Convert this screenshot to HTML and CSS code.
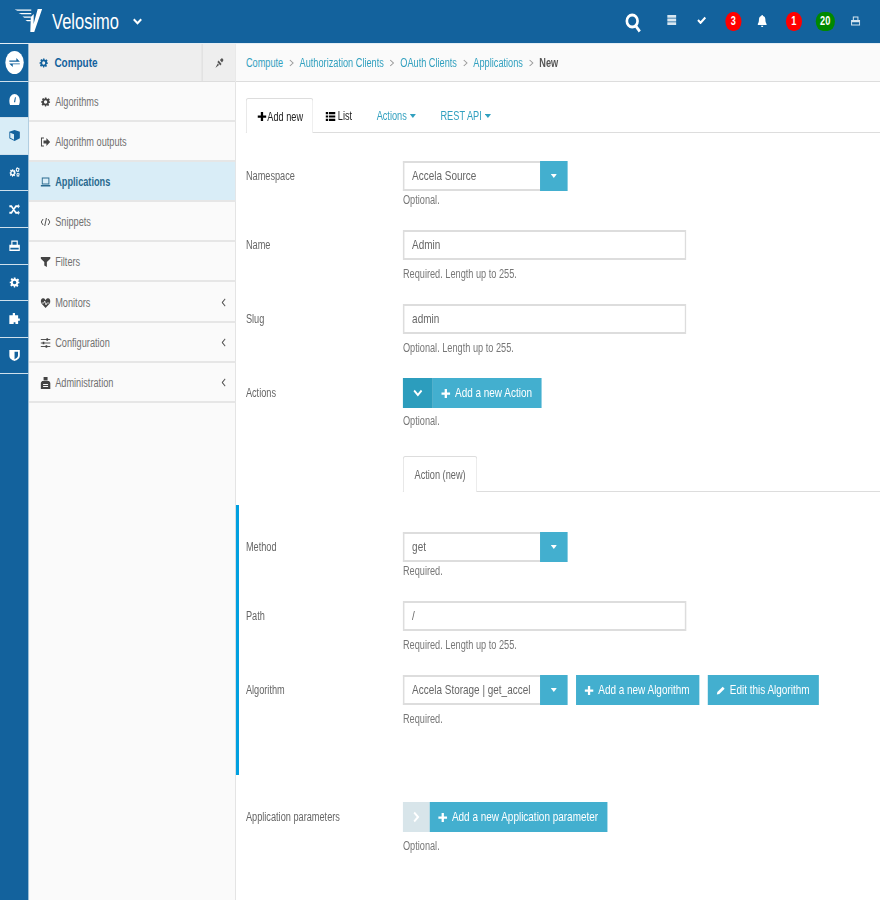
FILE: index.html
```html
<!DOCTYPE html>
<html lang="en">
<head>
<meta charset="utf-8">
<title>Velosimo</title>
<link rel="stylesheet" href="styles.css">
</head>
<body>
<svg class="defs" aria-hidden="true">
<symbol id="gear" viewBox="0 0 24 24" preserveAspectRatio="none"><path fill-rule="evenodd" d="M10 1h4l.7 3.200 1.900.8 2.800-1.800 2.800 2.800-1.800 2.800.8 1.900L23 10.500v3l-3.200.7-.8 1.900 1.800 2.800-2.800 2.800-2.800-1.800-1.900.8L13.500 23h-3l-.7-3.200-1.900-.8-2.800 1.800-2.800-2.800 1.800-2.800-.8-1.900L1 13.500v-3l3.200-.7.800-1.900-1.800-2.800 2.800-2.800 2.800 1.800 1.900-.8zM12 8a4 4 0 1 0 0 8 4 4 0 0 0 0-8z"/></symbol>
<symbol id="plus" viewBox="0 0 12 12" preserveAspectRatio="none"><path d="M4.500 0h3v4.500H12v3H7.500V12h-3V7.500H0v-3h4.500z"/></symbol>
<symbol id="caret" viewBox="0 0 8 5" preserveAspectRatio="none"><path d="M0 0h8L4 5z"/></symbol>
<symbol id="lchev" viewBox="0 0 6 10" preserveAspectRatio="none"><path d="M5 1 1 5l4 4" fill="none" stroke="currentColor" stroke-width="1.200"/></symbol>
</svg>

<div class="page">
<header class="topbar">
  <div class="brand">
    <svg class="logo" viewBox="0 0 28 24" preserveAspectRatio="none"><path d="M23.500 1H28l-8 23h-4l.5-15 3-3-.2 10z" fill="#fff"/><path d="M0 1.500h17v1.300H3zM4 5h13v1.300H7zM8 8.500h8.500v1.300H10zM11 12h5.500v1.300H13z" fill="#fff"/></svg>
    <span class="brand-name">Velosimo</span>
    <svg class="brand-chev" viewBox="0 0 12 8" preserveAspectRatio="none"><path d="M1.500 1.500 6 6l4.500-4.500" fill="none" stroke="#fff" stroke-width="2.400"/></svg>
  </div>
  <div class="top-tools">
    <svg class="t-search" viewBox="0 0 18 20" preserveAspectRatio="none"><circle cx="8" cy="8" r="6" fill="none" stroke="#fff" stroke-width="3"/><path d="m12 13 4.500 5.500" stroke="#fff" stroke-width="3"/></svg>
    <svg class="t-server" viewBox="0 0 10 10" preserveAspectRatio="none"><path fill="#d8e6f0" d="M0 0h10v2.800H0zM0 3.600h10v2.800H0zM0 7.200h10V10H0z"/></svg>
    <svg class="t-check" viewBox="0 0 10 8" preserveAspectRatio="none"><path d="M1 4l2.800 2.800L9 1.400" fill="none" stroke="#fff" stroke-width="2.200"/></svg>
    <span class="badge red b-three">3</span>
    <svg class="t-bell" viewBox="0 0 10 12" preserveAspectRatio="none"><path fill="#fff" d="M5 0c.6 0 1 .4 1 1 1.800.4 2.500 2 2.500 3.500 0 2.500.5 3.500 1.500 4.500v1H0V9c1-1 1.500-2 1.500-4.500C1.500 3 2.200 1.400 4 1c0-.6.400-1 1-1zM3.800 10.700h2.400c0 .8-.5 1.300-1.200 1.300s-1.200-.5-1.200-1.300z"/></svg>
    <span class="badge red b-one">1</span>
    <span class="badge green b-twenty">20</span>
    <svg class="t-print" viewBox="0 0 10 10" preserveAspectRatio="none"><path fill="none" stroke="#d8e6f0" stroke-width="1.100" d="M2.500 4V1h5v3M.6 4.500h8.800v4.500H.6z"/><path fill="#d8e6f0" d="M.6 4.500h8.800v1.800H.6z"/></svg>
  </div>
</header>

<div class="shell">
  <nav class="rail">
    <a class="rail-item"><span class="rail-circle"><svg viewBox="0 0 12 10" preserveAspectRatio="none"><path fill="#13629d" d="M0 2.500h8V0l4 3.800H0zM12 6.200H4v2.800L0 5.400h12z"/></svg></span></a>
    <a class="rail-item"><svg class="r-ic" viewBox="0 0 12 10" preserveAspectRatio="none"><path fill="#fff" fill-rule="evenodd" d="M6 0a6 6 0 0 1 6 6c0 1.500-.4 3-1 4H1C.4 9 0 7.500 0 6a6 6 0 0 1 6-6zM5.300 7.500h1.400L7.500 3H6.500z"/></svg></a>
    <a class="rail-item current"><svg class="r-ic" viewBox="0 0 10 12" preserveAspectRatio="none"><path fill="#13629d" d="M5 0l5 2v7l-5 3-5-3V2z"/><path fill="#d9edf7" d="M1 3l3.500 1.500v6L1 8.500z"/></svg></a>
    <a class="rail-item"><svg class="r-ic" viewBox="0 0 14 12" preserveAspectRatio="none"><use href="#gear" x="0" y="2" width="9" height="9" fill="#fff"/><use href="#gear" x="8" y="0" width="6" height="6" fill="#fff"/><use href="#gear" x="9" y="6" width="5" height="5" fill="#fff"/></svg></a>
    <a class="rail-item"><svg class="r-ic" viewBox="0 0 12 10" preserveAspectRatio="none"><path fill="none" stroke="#fff" stroke-width="1.800" d="M0 2h2.500l5 6H10M0 8h2.500l5-6H10"/><path fill="#fff" d="M10 0l2 2-2 2zM10 6l2 2-2 2z"/></svg></a>
    <a class="rail-item"><svg class="r-ic" viewBox="0 0 12 10" preserveAspectRatio="none"><path fill="none" stroke="#fff" stroke-width="1.300" d="M3 4.500V1h6v3.500M.7 5h10.600v4.300H.7z"/><path fill="#fff" d="M.7 5h10.600v2H.7z"/></svg></a>
    <a class="rail-item"><svg class="r-ic"><use href="#gear" fill="#fff"/></svg></a>
    <a class="rail-item"><svg class="r-ic" viewBox="0 0 12 12" preserveAspectRatio="none"><path fill="#fff" d="M4 0h2.500v2.500h3.500V6H12v2.500H10V12H7V10H5v2H0V2.500h4z"/></svg></a>
    <a class="rail-item"><svg class="r-ic" viewBox="0 0 10 12" preserveAspectRatio="none"><path fill="#fff" fill-rule="evenodd" d="M0 0h10v6c0 3-2.500 5-5 6-2.500-1-5-3-5-6zM5 1.800v8.300c1.500-.8 3.200-2 3.200-4V1.800z"/></svg></a>
  </nav>

  <aside class="side">
    <div class="side-head">
      <div class="side-title"><svg class="side-gear"><use href="#gear" fill="#13629d"/></svg><span>Compute</span></div>
      <div class="side-pin"><svg viewBox="0 0 10 10" preserveAspectRatio="none"><path fill="#555" d="M0 10l3-4.500 1.500 1.500zM4 2.500 7.500 6 6 7.500 2.500 4zM5.500 2 8 0l2 2-2 2.500z"/></svg></div>
    </div>
    <ul class="side-list">
      <li class="side-item"><svg class="s-ic"><use href="#gear" fill="#444"/></svg><span>Algorithms</span></li>
      <li class="side-item"><svg class="s-ic" viewBox="0 0 12 10" preserveAspectRatio="none"><path fill="none" stroke="#444" stroke-width="1.200" d="M4 1H1v8h3"/><path fill="#444" d="M3.500 3.500H7V1l4.500 4L7 9V6.500H3.500z"/></svg><span>Algorithm outputs</span></li>
      <li class="side-item active"><svg class="s-ic" viewBox="0 0 12 10" preserveAspectRatio="none"><path fill="none" stroke="#2a6a8f" stroke-width="1.100" d="M2 1h8v6H2z"/><path fill="#2a6a8f" d="M0 8h12v1.500H0z"/></svg><span>Applications</span></li>
      <li class="side-item"><svg class="s-ic" viewBox="0 0 12 10" preserveAspectRatio="none"><path fill="none" stroke="#444" d="M3 2 .8 5 3 8M9 2l2.200 3L9 8M7 1 5 9"/></svg><span>Snippets</span></li>
      <li class="side-item"><svg class="s-ic" viewBox="0 0 10 10" preserveAspectRatio="none"><path fill="#444" d="M0 0h10v1.500L6.300 5v5L3.700 8.500V5L0 1.500z"/></svg><span>Filters</span></li>
      <li class="side-item"><svg class="s-ic" viewBox="0 0 12 10" preserveAspectRatio="none"><path fill="#444" d="M6 10 1 5.500C-1 3 1-.5 3.500.3 4.800.6 5.600 1.500 6 2.300 6.400 1.500 7.200.6 8.500.3 11-.5 13 3 11 5.500z"/><path fill="none" stroke="#fafafa" stroke-width=".8" d="M1 5h3l1-2 1.500 4 1-2h3"/></svg><span>Monitors</span><svg class="s-chev"><use href="#lchev"/></svg></li>
      <li class="side-item"><svg class="s-ic" viewBox="0 0 12 10" preserveAspectRatio="none"><path fill="none" stroke="#444" d="M0 1.500h12M0 5h12M0 8.500h12"/><path fill="#444" d="M7 .2h2v2.600H7zM2.500 3.700h2v2.600h-2zM6 7.200h2v2.600H6z"/></svg><span>Configuration</span><svg class="s-chev"><use href="#lchev"/></svg></li>
      <li class="side-item"><svg class="s-ic admin" viewBox="0 0 10 12" preserveAspectRatio="none"><path fill="#444" d="M3 0h4v3.500H3zM1.500 4h7L10 6v6H0V6z"/><path fill="#fafafa" d="M2.500 7h5v1h-5zM2.500 9h5v1h-5z"/></svg><span>Administration</span><svg class="s-chev"><use href="#lchev"/></svg></li>
    </ul>
  </aside>

  <main class="main">
    <div class="crumbs">
      <a>Compute</a><svg class="sep" viewBox="0 0 5 8" preserveAspectRatio="none"><path d="M1 1l3 3-3 3" fill="none" stroke="#999"/></svg>
      <a>Authorization Clients</a><svg class="sep" viewBox="0 0 5 8" preserveAspectRatio="none"><path d="M1 1l3 3-3 3" fill="none" stroke="#999"/></svg>
      <a>OAuth Clients</a><svg class="sep" viewBox="0 0 5 8" preserveAspectRatio="none"><path d="M1 1l3 3-3 3" fill="none" stroke="#999"/></svg>
      <a>Applications</a><svg class="sep" viewBox="0 0 5 8" preserveAspectRatio="none"><path d="M1 1l3 3-3 3" fill="none" stroke="#999"/></svg>
      <b>New</b>
    </div>

    <div class="tabs">
      <div class="tab on"><svg class="tab-ic"><use href="#plus"/></svg>Add new</div>
      <div class="tab"><svg class="tab-ic list" viewBox="0 0 12 10" preserveAspectRatio="none"><path d="M0 0h3v2.400H0zM4 0h8v2.400H4zM0 3.800h3v2.400H0zM4 3.800h8v2.400H4zM0 7.600h3V10H0zM4 7.600h8V10H4z"/></svg>List</div>
      <div class="tab link">Actions<svg class="tab-caret"><use href="#caret"/></svg></div>
      <div class="tab link">REST API<svg class="tab-caret"><use href="#caret"/></svg></div>
    </div>

    <form class="form">
      <div class="row first">
        <label class="lab">Namespace</label>
        <div class="ctl">
          <div class="combo"><span class="combo-val"><span class="combo-text">Accela Source</span></span><span class="combo-btn"><svg class="caret-w"><use href="#caret"/></svg></span></div>
          <p class="help">Optional.</p>
        </div>
      </div>
      <div class="row">
        <label class="lab">Name</label>
        <div class="ctl">
          <div class="field">Admin</div>
          <p class="help low">Required. Length up to 255.</p>
        </div>
      </div>
      <div class="row">
        <label class="lab">Slug</label>
        <div class="ctl">
          <div class="field">admin</div>
          <p class="help low">Optional. Length up to 255.</p>
        </div>
      </div>
      <div class="row">
        <label class="lab">Actions</label>
        <div class="ctl">
          <div class="btns"><span class="toggle"><svg viewBox="0 0 12 8" preserveAspectRatio="none"><path d="M1.500 1.500 6 6l4.500-4.500" fill="none" stroke="#fff" stroke-width="2.200"/></svg></span><span class="btn"><svg class="btn-ic"><use href="#plus"/></svg>Add a new Action</span></div>
          <p class="help mid">Optional.</p>
        </div>
      </div>

      <div class="subtabs"><div class="subtab">Action (new)</div></div>

      <section class="nested">
        <div class="row first">
          <label class="lab">Method</label>
          <div class="ctl">
            <div class="combo"><span class="combo-val"><span class="combo-text">get</span></span><span class="combo-btn"><svg class="caret-w"><use href="#caret"/></svg></span></div>
            <p class="help">Required.</p>
          </div>
        </div>
        <div class="row">
          <label class="lab">Path</label>
          <div class="ctl">
            <div class="field">/</div>
            <p class="help low">Required. Length up to 255.</p>
          </div>
        </div>
        <div class="row">
          <label class="lab">Algorithm</label>
          <div class="ctl">
            <div class="btn-line">
              <div class="combo"><span class="combo-val"><span class="combo-text">Accela Storage | get_accela</span></span><span class="combo-btn"><svg class="caret-w"><use href="#caret"/></svg></span></div>
              <span class="btn"><svg class="btn-ic"><use href="#plus"/></svg>Add a new Algorithm</span>
              <span class="btn"><svg class="btn-ic" viewBox="0 0 12 12" preserveAspectRatio="none"><path fill="#fff" d="M8.500 1 11 3.500 4 10.500.8 11.200 1.500 8z"/></svg>Edit this Algorithm</span>
            </div>
            <p class="help low">Required.</p>
          </div>
        </div>
      </section>

      <div class="row params">
        <label class="lab">Application parameters</label>
        <div class="ctl">
          <div class="btns"><span class="toggle off"><svg viewBox="0 0 8 12" preserveAspectRatio="none"><path d="M1.500 1.500 6 6l-4.500 4.500" fill="none" stroke="#fff" stroke-width="2.200"/></svg></span><span class="btn"><svg class="btn-ic"><use href="#plus"/></svg>Add a new Application parameter</span></div>
          <p class="help low">Optional.</p>
        </div>
      </div>
    </form>
  </main>
</div>
</div>
</body>
</html>
```

FILE: styles.css
```css
* { box-sizing: border-box; }
html, body { margin: 0; padding: 0; height: 100%; }
body {
  width: 880px;
  height: 900px;
  overflow: hidden;
  background: #fff;
  color: #666;
  font: 12px/16px "Liberation Sans", Arial, sans-serif;
}
p { margin: 0; }
ul { margin: 0; padding: 0; list-style: none; }
.defs { position: absolute; width: 0; height: 0; }

/* The source page is about 1149px wide, squeezed horizontally into the window. */
.page {
  width: 1148.800px;
  height: 900px;
  transform: scaleX(.766);
  transform-origin: 0 0;
}

.topbar {
  height: 44px;
  background: #13629d;
  border-bottom: 1px solid #e4eef5;
  display: flex;
  align-items: center;
  justify-content: space-between;
}
.brand { display: flex; align-items: center; padding-left: 19px; }
.logo { width: 36px; height: 24px; margin-top: -3px; }
.brand-name { margin-left: 13px; font-size: 21.500px; line-height: 30px; color: #fff; }
.brand-chev { width: 13px; height: 7px; margin-left: 18px; }
.top-tools { display: flex; align-items: center; padding-right: 26px; height: 43px; }
.t-search { width: 21px; height: 20px; margin-top: 2px; }
.t-server { width: 12px; height: 10px; margin: -3px 0 0 34px; }
.t-check { width: 12px; height: 8px; margin: -3px 0 0 27px; }
.badge {
  height: 19px;
  border-radius: 10px;
  color: #fff;
  font-size: 12px;
  font-weight: bold;
  line-height: 19px;
  text-align: center;
}
.red { background: #f00; }
.green { background: #080; }
.b-three { width: 21px; margin-left: 25px; }
.t-bell { width: 12px; height: 12px; margin: -2px 0 0 21px; }
.b-one { width: 21px; margin-left: 25px; }
.b-twenty { width: 25px; margin-left: 18px; }
.t-print { width: 12px; height: 10px; margin: -2px 0 0 21px; }

.shell { display: flex; height: 856px; }
.rail {
  width: 38px;
  padding-top: 1px;
  background: #13629d;
  display: grid;
  grid-auto-rows: 36.600px;
  border-right: 1px solid #e4eef5;
}
.rail-item {
  display: flex;
  align-items: center;
  justify-content: center;
  border-bottom: 1px solid #cfe0ec;
}
.rail-item.current { background: #d9edf7; }
.rail-circle {
  width: 24px;
  height: 23px;
  border-radius: 50%;
  background: #fff;
  display: flex;
  align-items: center;
  justify-content: center;
}
.rail-circle svg { width: 14px; height: 10px; }
.r-ic { width: 14px; height: 11px; }

.side { width: 270px; background: #fafafa; border-right: 1px solid #ddd; }
.side-head { height: 38px; background: #eee; border-bottom: 1px solid #ddd; display: flex; }
.side-title {
  flex: 1;
  display: flex;
  align-items: center;
  padding-left: 13px;
  color: #13629d;
  font-size: 13px;
  font-weight: bold;
}
.side-gear { width: 12px; height: 10px; margin-right: 8px; }
.side-pin { width: 44px; border-left: 2px solid #e2e2e2; display: flex; align-items: center; justify-content: center; }
.side-pin svg { width: 11px; height: 10px; }
.side-item {
  height: 40.100px;
  display: flex;
  align-items: center;
  padding: 2px 12px 0 15px;
  border-bottom: 2px solid #e6e6e6;
  color: #707070;
  font-size: 12px;
}
.side-item span { flex: 1; margin-left: 6px; }
.side-item.active { background: #d9edf7; color: #2a6a8f; font-weight: bold; }
.s-ic { width: 13px; height: 10px; }
.s-ic.admin { height: 12px; }
.s-chev { width: 6px; height: 9px; color: #555; }

.main { flex: 1; min-width: 0; }
.crumbs {
  height: 38px;
  background: #fafafa;
  border-bottom: 1px solid #ddd;
  padding-left: 13px;
  display: flex;
  align-items: center;
  font-size: 12px;
  color: #31a0bf;
}
.crumbs b { color: #555; }
.sep { width: 7px; height: 8px; margin: 0 7.200px; }

.tabs { margin: 16px 0 0 13px; height: 35px; display: flex; border-bottom: 1px solid #ddd; }
.tab {
  padding: 1px 16px 0;
  height: 35px;
  color: #222;
  font-size: 12px;
  white-space: nowrap;
  display: flex;
  align-items: center;
}
.tab.on {
  width: 88px;
  padding: 1px 0 0 14px;
  background: #fff;
  border: 1px solid #ddd;
  border-bottom: 0;
  border-radius: 3px 3px 0 0;
}
.tab.link { color: #31a0bf; }
.tab-ic { width: 12px; height: 9px; margin-right: 1px; }
.tab-ic.list { width: 13px; height: 9px; margin-right: 3px; }
.tab-caret { width: 8px; height: 4px; margin-left: 4px; fill: #31a0bf; }

.form { padding-top: 28px; }
.row { display: flex; padding: 22px 0 0 13px; }
.row.first { padding-top: 0; }
.lab { width: 205px; padding-top: 6.500px; color: #666; font-size: 12px; }
.help { padding-top: 1px; color: #777; font-size: 12px; }
.help.low { padding-top: 6px; }
.help.mid { padding-top: 5px; }
.combo { display: flex; width: 215px; height: 30px; }
.combo-val {
  flex: 1;
  min-width: 0;
  border: 2px solid #ddd;
  border-right: 0;
  padding: 5px 12px 0 10px;
  color: #666;
  font-size: 13px;
}
.combo-text { display: block; white-space: nowrap; overflow: hidden; }
.combo-btn {
  width: 36px;
  background: #43afcf;
  display: flex;
  align-items: center;
  justify-content: center;
}
.caret-w { width: 8px; height: 4px; fill: #fff; }
.field {
  width: 370px;
  height: 30px;
  border: 2px solid #ddd;
  padding: 5px 10px 0;
  color: #666;
  font-size: 13px;
}
.btns { display: flex; height: 30px; }
.toggle { width: 39px; background: #2c9dbd; display: flex; align-items: center; justify-content: center; }
.toggle svg { width: 13px; height: 8px; }
.toggle.off { width: 35px; background: #d8e5ea; }
.toggle.off svg { width: 9px; height: 12px; }
.btn {
  display: flex;
  align-items: center;
  height: 30px;
  padding: 0 12.500px 0 11px;
  background: #43afcf;
  color: #fff;
  font-size: 13px;
  white-space: nowrap;
}
.btn-ic { width: 12px; height: 9px; margin-right: 6px; fill: #fff; }
.btn-line { display: flex; gap: 11px; }
.subtabs { margin: 27px 0 0 218px; height: 36px; border-bottom: 1px solid #ddd; }
.subtab {
  width: 97px;
  height: 36px;
  border: 1px solid #ddd;
  border-bottom: 0;
  border-radius: 3px 3px 0 0;
  background: #fff;
  padding-top: 10px;
  text-align: center;
  color: #666;
}
.nested { margin-top: 13px; height: 270px; padding-top: 27px; border-left: 4px solid #00a0e0; }
.nested .row { padding-left: 9px; }
.params { padding-top: 27px; }
```
